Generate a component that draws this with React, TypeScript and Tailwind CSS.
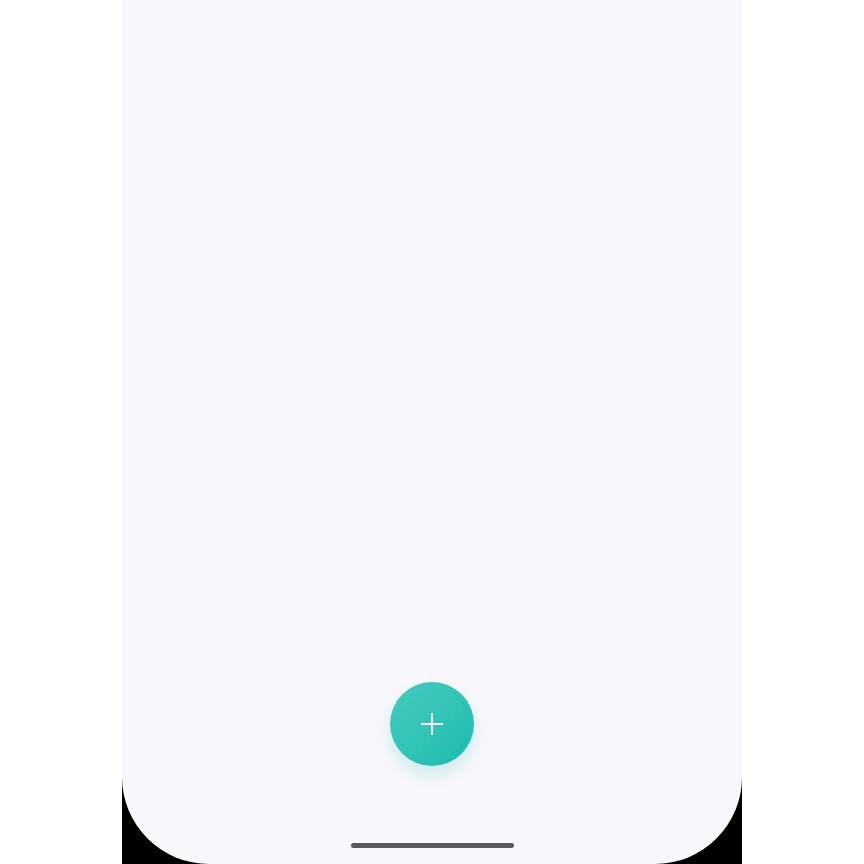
export default function App() {
  return (
    <div className="flex h-[864px] w-full justify-center bg-white">
      <div className="h-full w-[620px] bg-black">
        <div className="flex h-full flex-col items-center rounded-b-[87px] bg-[#f8f7fc]">
          <button
            type="button"
            className="mt-[682px] flex h-[84px] w-[84px] items-center justify-center rounded-full bg-gradient-to-br from-[#45cbbf] to-[#17bcae] shadow-[0_10px_16px_rgba(30,190,175,0.18)]"
          >
            <svg width="22" height="22" viewBox="0 0 22 22" fill="none">
              <path d="M11 1v20M1 11h20" stroke="white" strokeWidth="2" strokeLinecap="round" />
            </svg>
          </button>
          <div className="mt-[77px] h-[5px] w-[163px] rounded-full bg-[#5a5a5e]" />
        </div>
      </div>
    </div>
  );
}
